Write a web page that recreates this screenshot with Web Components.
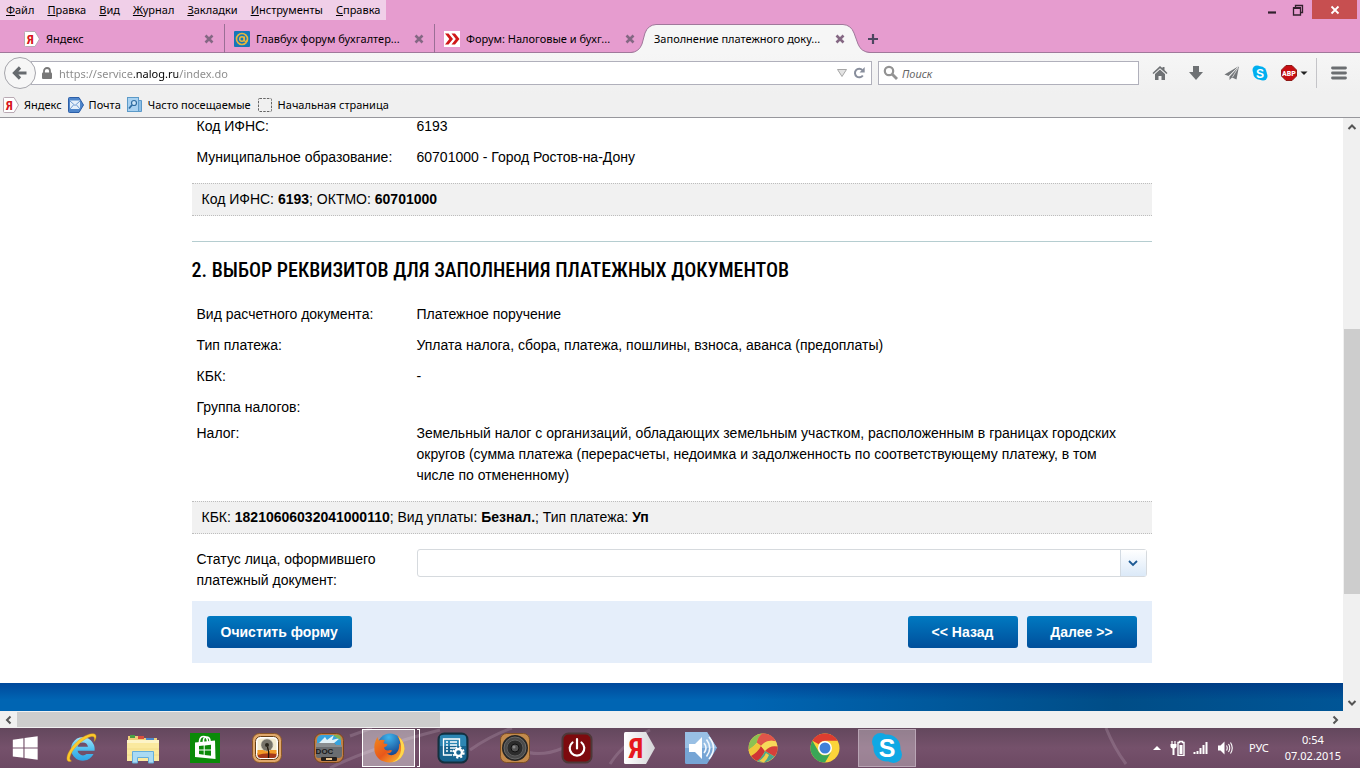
<!DOCTYPE html>
<html lang="ru">
<head>
<meta charset="utf-8">
<title>Заполнение платежного документа</title>
<style>
  html, body { height: 100%; margin: 0; }
  body {
    font: 11px/16px "Noto Sans", "Open Sans", sans-serif;
    color: #000;
    background: #fff;
    overflow: hidden;
  }
</style>
</head>
<body>
<desktop-screen></desktop-screen>

<script>
(function () {
  'use strict';

  const reset = `
    * { box-sizing: border-box; }
    button { border: 0; padding: 0; margin: 0; background: transparent; font: inherit; color: inherit; cursor: default; }
    a { color: inherit; text-decoration: none; }
    input, select { font: inherit; margin: 0; border: 0; padding: 0; outline: 0; background: transparent; }
  `;

  function define(name, style, markup, setup) {
    const template = document.createElement('template');
    template.innerHTML = `<style>${reset}${style}</style>${markup}`;
    customElements.define(name, class extends HTMLElement {
      constructor() {
        super();
        this.attachShadow({ mode: 'open' }).appendChild(template.content.cloneNode(true));
      }
      connectedCallback() {
        if (setup) {
          setup.call(this, this.shadowRoot);
        }
      }
    });
  }

  // name: [size, markup]
  const icons = {
    yandex: [16, `<path d="M.5 1.5a1 1 0 0 1 1-1H11L15.500 8 11 15.500H1.500a1 1 0 0 1-1-1z" fill="#fff" stroke="#b9a9b3"/><text x="6.500" y="13" text-anchor="middle" font-size="13" font-family="Roboto Condensed, Liberation Sans" font-weight="bold" fill="#d8141c">Я</text>`],
    glavbuh: [16, `<rect width="16" height="16" rx="1" fill="#1577b8"/><circle cx="8" cy="8" r="5.500" fill="none" stroke="#e8b63c" stroke-width="1.600"/><circle cx="8" cy="8" r="2.300" fill="none" stroke="#e8b63c" stroke-width="1.500"/><path d="M10.300 5.500V9q.2 1.500 1.500 1.500t1.700-2" fill="none" stroke="#e8b63c" stroke-width="1.500"/>`],
    forum: [16, `<rect width="16" height="16" fill="#fff"/><path d="M1 2.500h3.500L9 8l-4.500 5.500H1L5.300 8zM7.500 2.500H11L15.500 8 11 13.500H7.500L11.800 8z" fill="#d01818"/>`],
    mail: [16, `<path d="M.5 1.500a1 1 0 0 1 1-1H11L15.500 8 11 15.500H1.500a1 1 0 0 1-1-1z" fill="#4f86cb" stroke="#2c5fa8"/><rect x="2" y="3.500" width="10" height="8.500" fill="#e6effa"/><path d="M2 4l5 4.500L12 4M2 12l3.500-4M12 12L8.500 8" fill="none" stroke="#6e9ad1"/>`],
    often: [16, `<path d="M2 3.500h12.500v11H2z" fill="#8dbfe6" stroke="#5a98c9"/><rect x=".5" y=".5" width="11" height="14" fill="#a9d2f1" stroke="#5c9ac8"/><circle cx="7" cy="6" r="2.500" fill="#cde6f8" stroke="#2f6da1" stroke-width="1.200"/><path d="M5 8l-3 3.500" stroke="#2f6da1" stroke-width="1.800"/>`],
    blank: [16, `<rect x="1.500" y="1.500" width="13" height="13" rx="1" fill="none" stroke="#666" stroke-dasharray="2.500 1.200"/>`],
    close: [10, `<path d="M1.500 1.500l7 7M8.500 1.500l-7 7" stroke="#846783" stroke-width="2.600"/>`],
    plus: [12, `<path d="M6 1v10M1 6h10" stroke="#4d4660" stroke-width="2.200"/>`],
    minimize: [12, `<path d="M2 8.500h8" stroke="#31202d" stroke-width="2.200"/>`],
    restore: [12, `<path d="M1.500 4h7v7h-7zM3.500 3.500v-2h7v7h-1.500" fill="none" stroke="#31202d" stroke-width="1.300"/><path d="M1 4h8" stroke="#31202d" stroke-width="2"/>`],
    cross: [10, `<path d="M1.500 1.500l7 7M8.500 1.500l-7 7" stroke="#fff" stroke-width="1.800"/>`],
    back: [16, `<path d="M14.500 8H3M8 2.500L2.500 8 8 13.500" fill="none" stroke="#666a6e" stroke-width="3.200"/>`],
    lock: [12, `<path d="M3 6V4a3 3 0 0 1 6 0v2" fill="none" stroke="#787878" stroke-width="1.800"/><rect x="1" y="5.500" width="10" height="6.500" rx="1" fill="#787878"/>`],
    history: [10, `<path d="M.5 1.500h9L5 8.500z" fill="#e3e3e3" stroke="#a7a7a7"/>`],
    reload: [12, `<path d="M9.800 8.500A4.300 4.300 0 1 1 9.300 3" fill="none" stroke="#888e9c" stroke-width="2"/><path d="M11.700 0v5.500H6.500z" fill="#888e9c"/>`],
    search: [16, `<circle cx="6" cy="6" r="4.200" fill="none" stroke="#939393" stroke-width="2.200"/><path d="M9 9l5 5" stroke="#939393" stroke-width="2.800"/>`],
    home: [16, `<path d="M8 1L.5 8l1 1L8 3.300 14.500 9l1-1L12.500 5V2h-2v1.300z" fill="#6e7174"/><path d="M3 9l5-4.500L13 9v6H9.500v-4h-3v4H3z" fill="#6e7174"/>`],
    download: [16, `<path d="M5 1h6v6h4l-7 8-7-8h4z" fill="#6e7174"/>`],
    plane: [16, `<path d="M15 1L.5 9.500 4.500 11z" fill="#74777a"/><path d="M15 1L5.500 11.500V15l2.500-2.500 4.500 2z" fill="#74777a"/><path d="M15 1L5 11.500M14 3l-5.500 9" stroke="#f4f4f4" stroke-width=".7"/>`],
    skype: [16, `<circle cx="5" cy="5" r="4.500" fill="#00aff0"/><circle cx="11" cy="11" r="4.500" fill="#00aff0"/><circle cx="8" cy="8" r="6.800" fill="#00aff0"/><text x="8" y="12.500" text-anchor="middle" font-size="12" font-weight="bold" font-family="Liberation Sans" fill="#fff">S</text>`],
    adblock: [16, `<path d="M5 .5h6L15.500 5v6L11 15.500H5L.5 11V5z" fill="#c70d12" stroke="#8e1a17"/><text x="8" y="11" text-anchor="middle" font-size="8" font-weight="bold" font-family="Roboto Condensed, Liberation Sans" fill="#fff">ABP</text>`],
    caret: [8, `<path d="M.5 2.500h7L4 6z" fill="#222"/>`],
    menu: [16, `<path d="M1.500 3h13M1.500 8h13M1.500 13h13" stroke="#6b6e71" stroke-width="2.800" stroke-linecap="round"/>`],
    up: [10, `<path d="M1.500 7L5 3.500 8.500 7" fill="none" stroke="#555" stroke-width="2"/>`],
    down: [10, `<path d="M1.500 3L5 6.500 8.500 3" fill="none" stroke="#555" stroke-width="2"/>`],
    left: [10, `<path d="M6.500 1.500L3 5l3.500 3.500" fill="none" stroke="#555" stroke-width="2"/>`],
    right: [10, `<path d="M3.500 1.500L7 5 3.500 8.500" fill="none" stroke="#555" stroke-width="2"/>`],
    chevron: [12, `<path d="M2 4l4 4 4-4" fill="none" stroke="#1d5a94" stroke-width="1.800"/>`],

    windows: [32, `<path d="M3 7.300l11.300-1.700V15.400H3zM15.500 5.400L29.500 3.500v11.900h-14zM3 16.600h11.300v9.900L3 25zM15.500 16.600h14v12l-14-2z" fill="#fff"/>`],
    ie: [32, `<defs><linearGradient id="g" gradientUnits="userSpaceOnUse" x1="0" y1="5" x2="0" y2="30"><stop stop-color="#a4e6fb"/><stop offset=".5" stop-color="#4fc0f0"/><stop offset="1" stop-color="#2b9fe4"/></linearGradient></defs><path d="M28.500 22A11.800 11.800 0 1 1 29.500 18.800H12.500A5.400 5.400 0 0 0 21.500 22zM12.600 14.700H23A5.300 5.300 0 0 0 12.600 14.700z" fill="url(#g)" fill-rule="evenodd"/><path d="M6.500 29C1 31.500 0 25 6 16.500 12 7.500 24 0 29.500 2c2.500 1.200 1.800 4.500-.3 7.500.8-3.500.2-5.500-2.800-5C20 5.500 9 15 6 22c-1.800 4-1.500 6 .5 7z" fill="#fcc92c" stroke="#d79a10" stroke-width=".4"/>`],
    explorer: [32, `<path d="M1 4h11l2 2h16v23H1z" fill="#eed07a"/><rect x="3" y="3" width="5" height="3" fill="#49a046"/><rect x="11" y="4" width="6" height="3" fill="#d84e3e"/><rect x="19" y="6" width="8" height="2" fill="#4c89c9"/><path d="M0 8h32v21H0z" fill="#fae99f"/><path d="M0 8h32v3H0z" fill="#fdf4c8"/><path d="M0 17h32M0 23h32" stroke="#f0d884" stroke-width=".8"/><path d="M5.500 31V19.500h21V31h-5v-5.500h-11V31z" fill="#a9daf4" stroke="#65aedb"/>`],
    store: [32, `<rect x="1" y="1" width="30" height="30" fill="#0a8a08"/><path d="M6 10.500l20-2 .500 18.500L6 25z" fill="#fff"/><path d="M10.500 12V9q.5-4.500 4-4.500T18.500 9v1M14.500 10V8q.5-3.500 3.500-3t3 4" fill="none" stroke="#fff" stroke-width="1.600"/><path d="M10 14l4.700-.5v4H10zM15.700 13.400l6.300-.6v4.700h-6.300zM10 18.500h4.700v4.300L10 22zM15.700 18.500H22v5.200l-6.300-.8z" fill="#0a8a08"/>`],
    dandelion: [32, `<rect x="1.500" y="1.500" width="29" height="29" rx="7" fill="#e0a76a" stroke="#8c5726"/><rect x="4.500" y="4.500" width="23" height="23" rx="5" fill="#fff" stroke="#674016"/><rect x="6.500" y="6.500" width="19" height="19" rx="3" fill="#f2ead0"/><path d="M6.500 21h19v2q0 3-3 3h-13q-3 0-3-3z" fill="#a5391a"/><path d="M6.500 18h19v4q-10-2-19 1z" fill="#f29a28"/><circle cx="16" cy="13" r="6" fill="#77746a"/><circle cx="16" cy="13" r="6" fill="none" stroke="#c9c6b8" stroke-dasharray="1 1"/><circle cx="16" cy="13" r="2" fill="#29251c"/><path d="M16.500 15q2 5 1 11" fill="none" stroke="#1d1408" stroke-width="1.300"/>`],
    doc: [32, `<rect x="1.500" y="1.500" width="29" height="29" rx="7" fill="#c28046" stroke="#76451e"/><path d="M4 13V7q1-4 5-4h14q4 0 5 4v6z" fill="#38a3dc"/><path d="M6 11l6-6 2 3 7-5-2 5 8-2-7 6z" fill="#e1f1f6"/><path d="M20 3h4q4 0 4 5l-4-2z" fill="#7fb455"/><path d="M3 11h18l2 2h6v11q-1 2-3 2H6q-3 0-3-2z" fill="#6a6d70"/><path d="M3 11h18l2 2h6v2H3z" fill="#8a8e90"/><text x="11.500" y="22" text-anchor="middle" font-size="8" font-weight="bold" font-family="Liberation Sans" fill="#191919">DOC</text><rect x="8" y="25" width="16" height="4" rx="1" fill="#25201c"/><rect x="13" y="26" width="6" height="2" fill="#e7c18a"/>`],
    firefox: [32, `<defs><radialGradient id="f" cx=".45" cy=".15" r=".8"><stop stop-color="#3fb4ec"/><stop offset="1" stop-color="#123a86"/></radialGradient><linearGradient id="o" x2="1" y2="1"><stop stop-color="#f08a1e"/><stop offset=".5" stop-color="#e9571a"/><stop offset="1" stop-color="#ffcf35"/></linearGradient></defs><circle cx="17" cy="14" r="12.500" fill="url(#f)"/><path d="M25 4q6.500 5 6.500 13Q30 29 17 30.500 4 30 1.500 19 .5 11 4.500 5q.2 2.500 1.500 3.500Q9 7 12 8.500q-1.500 1-1.500 3l4 .5q0 2-3.500 3.500.5 3 4 3 2.500-1 4 0-1 3-5 3 4 3.500 9 0 4-4 3-10 1.500 1 1.500 3 0-6-3-10.500z" fill="url(#o)"/><path d="M25 4q6.500 5 6.500 13Q30 28 19 30.500q8-3.500 9-12 .5-8-3-14.500z" fill="#ffd84c"/>`],
    settings: [32, `<rect x="1.500" y="1.500" width="29" height="29" rx="6" fill="#17648f" stroke="#14303f" stroke-width="2"/><path d="M3 4q1-1 3-1h20q3 0 3 3v8H3z" fill="#2d86b3"/><path d="M9 10h2M13 10h7M9 13h2M13 13h7M9 16h2M13 16h5M9 19h2M13 19h2" stroke="#fff" stroke-width="1.300"/><path d="M22.500 14V7H6.500v16H15" fill="none" stroke="#fff" stroke-width="1.300"/><circle cx="21.500" cy="20.500" r="3.500" fill="#17648f" stroke="#fff" stroke-width="2.400"/><circle cx="21.500" cy="20.500" r="5.200" fill="none" stroke="#fff" stroke-width="2" stroke-dasharray="2.100 2"/>`],
    speaker: [32, `<rect x="1.500" y="1.500" width="29" height="29" rx="6" fill="#c38a4c" stroke="#7f5125"/><circle cx="16" cy="16" r="13" fill="#262626"/><circle cx="16" cy="16" r="11" fill="#4a4a4a" stroke="#6a6a6a"/><circle cx="16" cy="16" r="8" fill="#2c2c2c" stroke="#5d5d5d"/><circle cx="16" cy="16" r="4" fill="#555" stroke="#111"/><circle cx="15" cy="15" r="1.500" fill="#888"/>`],
    power: [32, `<rect x="1.500" y="1.500" width="29" height="29" rx="6" fill="#7d0a0e" stroke="#4d3838" stroke-width="2"/><path d="M11.500 10.500a7.300 7.300 0 1 0 9 0M16 7v9.500" fill="none" stroke="#fff" stroke-width="2.200" stroke-linecap="round"/>`],
    yandexbig: [32, `<defs><linearGradient id="y" x2="1"><stop stop-color="#fff"/><stop offset="1" stop-color="#d5d5d8"/></linearGradient></defs><path d="M1 1.500Q1 0 2.500 0H23l9 16-9 16H2.500Q1 32 1 30.500z" fill="url(#y)"/><text x="13" y="26" text-anchor="middle" font-size="28" font-weight="bold" font-family="Roboto Condensed, Liberation Sans" fill="#e6191e">Я</text>`],
    volume: [32, `<path d="M0 1.500Q0 0 1.500 0H22l10 16-10 16H1.500Q0 32 0 30.500z" fill="#76a5d5"/><path d="M0 0h22l10 16H0z" fill="#98bfe4"/><path d="M4 12h6l7-7v22l-7-7H4z" fill="#fff"/><path d="M19 11q4 5 0 10M21.500 7.500q6.500 8.500 0 17M24 5q9 11 0 22" fill="none" stroke="#f3f8fd" stroke-width="1.600"/>`],
    ball: [32, `<circle cx="16" cy="16" r="14.500" fill="#f4d04a"/><path d="M2 12Q5 3 15 1.500q-5 5-5 9-3 4-8 7z" fill="#8cc152"/><path d="M15 1.500Q25 1 29 9.500 20 7 14 14q-2-2-4-3 0-5 5-9.500z" fill="#e0554a"/><path d="M1.500 18q8-6 8.500-7l4 3Q9 22 4 24q-2-3-2.500-6z" fill="#f0c63a"/><path d="M4 24q7-4 10-10l4 5q-4 8-8 10-4-2-6-5z" fill="#cf3435"/><path d="M29 9.500l1.500 5q-7-1-12.500 4.500l-4-5Q20 7 29 9.500z" fill="#f6d95a"/><path d="M30.500 14.500q.5 6-3 10L18 19q5-6 12.500-4.500z" fill="#d5403a"/><path d="M10 29q5-3 8-10l9.500 5.500Q20 33 10 29z" fill="#4ba58c"/><path d="M12 29q5-3 7-8l3 2q-2 5-5 7.500z" fill="#f0cc49"/>`],
    chrome: [32, `<circle cx="16" cy="16" r="14.500" fill="#fbd43a"/><path d="M3.440 8.750A14.500 14.500 0 0 1 28.560 8.750H16A7.250 7.250 0 0 0 9.720 12.370z" fill="#de3d30"/><path d="M3.440 8.750A14.500 14.500 0 0 0 16 30.500L22.280 19.630A7.250 7.250 0 0 1 9.720 19.630z" fill="#3aa757"/><circle cx="16" cy="16" r="7" fill="#fff"/><circle cx="16" cy="16" r="5.500" fill="#3f80d8"/>`],
    skypebig: [32, `<circle cx="9.500" cy="9.500" r="8.500" fill="#0fa8e4"/><circle cx="22.500" cy="22.500" r="8.500" fill="#0fa8e4"/><circle cx="16" cy="16" r="13.500" fill="#0fa8e4"/><text x="16" y="25" text-anchor="middle" font-size="25" font-weight="bold" font-family="Liberation Sans" fill="#fff">S</text>`],
    trayup: [8, `<path d="M0 6h8L4 2z" fill="#fff"/>`],
    battery: [16, `<path d="M3 1v3M6 1v3" stroke="#fff" stroke-width="1.200"/><path d="M1.500 4h6v2.500q0 1.500-2 2V15h-2V8.500q-2-.5-2-2z" fill="#fff"/><path d="M9 2.500h1.500v-1h3v1H15v13H9z" fill="none" stroke="#fff" stroke-width="1.400"/><path d="M10.500 5h3v9h-3z" fill="#fff"/>`],
    signal: [16, `<path d="M1.500 14v-2M4.500 14v-3M7.500 14V8M10.500 14V5M13.500 14V2" stroke="#fff" stroke-width="2"/>`],
    sound: [16, `<path d="M1 5.500h2.500L7.500 1.500v13l-4-4H1z" fill="#fff"/><path d="M9.500 5.500q1.500 2.500 0 5M11.500 4q2.500 4 0 8M13.500 2.500q3.500 5.500 0 11" fill="none" stroke="#fff" stroke-width="1.100"/>`]
  };

  customElements.define('ui-icon', class extends HTMLElement {
    connectedCallback() {
      if (this.shadowRoot) {
        return;
      }
      const [size, body] = icons[this.getAttribute('name')];
      const shown = this.getAttribute('size') || size;
      this.attachShadow({ mode: 'open' }).innerHTML = `
        <style>:host { display: inline-flex; flex: none; } svg { display: block; }</style>
        <svg width="${shown}" height="${shown}" viewBox="0 0 ${size} ${size}" aria-hidden="true">${body}</svg>`;
    }
  });

  define('menu-bar', `
    :host { display: flex; justify-content: space-between; align-items: flex-start; height: 20px; }
    nav { display: flex; gap: 13px; height: 20px; padding: 2px 6px; background: #f0cfe8; }
    nav button { line-height: 16px; }
    .controls { display: flex; margin-right: 3px; }
    .controls button { display: grid; place-items: center; width: 26px; height: 19px; }
    .controls .close { width: 45px; margin-left: 1px; background: #c74f50; }
  `, `
    <nav aria-label="Меню">
      <button><u>Ф</u>айл</button><button><u>П</u>равка</button><button><u>В</u>ид</button>
      <button><u>Ж</u>урнал</button><button><u>З</u>акладки</button>
      <button><u>И</u>нструменты</button><button><u>С</u>правка</button>
    </nav>
    <div class="controls">
      <button aria-label="Свернуть"><ui-icon name="minimize"></ui-icon></button>
      <button aria-label="Восстановить"><ui-icon name="restore"></ui-icon></button>
      <button class="close" aria-label="Закрыть"><ui-icon name="cross"></ui-icon></button>
    </div>
  `);

  define('browser-tab', `
    :host { display: flex; align-items: center; gap: 6px; flex: 0 1 210px; min-width: 0; height: 29px; padding: 0 10px 0 9px; position: relative; }
    :host([divided]) { border-right: 1px solid #9a6f95; }
    .shape { display: none; position: absolute; left: -14px; top: 0; width: 240px; height: 29px; }
    :host([active]) .shape { display: block; }
    .title { flex: 1; min-width: 0; overflow: hidden; white-space: nowrap; position: relative; }
    .end { position: relative; display: flex; }
  `, `
    <svg class="shape" viewBox="0 0 240 29" aria-hidden="true">
      <path d="M0 29Q8 28 11 20L14 9Q17 1 25 .5H212Q220 1 223 9L227 20Q230 28 239 29z" fill="#f6f6f6"/>
      <path d="M0 28.500Q8 28 11 20L14 9Q17 1 25 .5H212Q220 1 223 9L227 20Q230 28 239 28.500" fill="none" stroke="#a0789b"/>
    </svg>
    <slot name="icon"></slot>
    <span class="title"><slot></slot></span>
    <button class="end" aria-label="Закрыть вкладку"><ui-icon name="close"></ui-icon></button>
  `);

  define('tab-strip', `
    :host { display: flex; align-items: center; height: 33px; padding: 4px 15px 0; box-shadow: inset 0 -1px #a0789b; }
    .add { margin-left: 12px; display: flex; }
  `, `
    <browser-tab divided><ui-icon slot="icon" name="yandex"></ui-icon>Яндекс</browser-tab>
    <browser-tab divided><ui-icon slot="icon" name="glavbuh"></ui-icon>Главбух форум бухгалтер...</browser-tab>
    <browser-tab><ui-icon slot="icon" name="forum"></ui-icon>Форум: Налоговые и бухг...</browser-tab>
    <browser-tab active>Заполнение платежного доку...</browser-tab>
    <button class="add" aria-label="Новая вкладка"><ui-icon name="plus"></ui-icon></button>
  `);

  define('nav-toolbar', `
    :host { display: flex; align-items: center; height: 40px; padding: 0 12px 0 4px; background: linear-gradient(#f6f6f6, #f0f0f0); }
    .back { display: grid; place-items: center; flex: none; width: 32px; height: 32px; border: 1px solid #a5a5ab; border-radius: 50%; background: #f6f6f6; z-index: 1; }
    .field { display: flex; align-items: center; height: 24px; background: #fff; border: 1px solid #b0b0bb; }
    .address { flex: 1; min-width: 0; margin-left: -5px; padding: 0 6px 0 9px; gap: 6px; }
    .address button { display: flex; }
    .search { flex: 0 1 261px; margin-left: 6px; padding: 0 4px; gap: 3px; }
    input { flex: 1; min-width: 0; height: 20px; }
    #url {
      color: #777; -webkit-text-fill-color: transparent; -webkit-background-clip: text; background-clip: text;
      background-image: linear-gradient(90deg, #888 75px, #000 75px, #000 119px, #888 119px);
    }
    #find::placeholder { color: #666; font-style: italic; opacity: 1; }
    .tools { display: flex; align-items: center; margin-left: 3px; }
    .tools button { display: flex; align-items: center; justify-content: center; width: 36px; height: 24px; gap: 3px; }
    .tools .skype { width: 20px; margin-right: 10px; }
    .tools .adblock { width: 28px; }
    .tools .menu { width: 32px; height: 30px; margin-left: 8px; padding-left: 12px; border-left: 1px solid #c4c4c8; }
  `, `
    <button class="back" aria-label="Назад"><ui-icon name="back"></ui-icon></button>
    <div class="field address">
      <ui-icon name="lock"></ui-icon>
      <input id="url" type="text" aria-label="Адрес" value="https://service.nalog.ru/index.do" spellcheck="false">
      <button aria-label="История"><ui-icon name="history"></ui-icon></button>
      <button aria-label="Обновить"><ui-icon name="reload"></ui-icon></button>
    </div>
    <div class="field search">
      <ui-icon name="search"></ui-icon>
      <input id="find" type="text" aria-label="Поиск" placeholder="Поиск">
    </div>
    <div class="tools">
      <button aria-label="Домой"><ui-icon name="home"></ui-icon></button>
      <button aria-label="Загрузки"><ui-icon name="download"></ui-icon></button>
      <button aria-label="Отправить"><ui-icon name="plane"></ui-icon></button>
      <button class="skype" aria-label="Skype"><ui-icon name="skype"></ui-icon></button>
      <button class="adblock" aria-label="Adblock Plus"><ui-icon name="adblock"></ui-icon><ui-icon name="caret"></ui-icon></button>
      <button class="menu" aria-label="Открыть меню"><ui-icon name="menu"></ui-icon></button>
    </div>
  `);

  define('bookmarks-bar', `
    :host { display: flex; align-items: center; gap: 6px; height: 25px; padding: 0 3px; background: #f0f0f0; border-bottom: 1px solid #97979c; }
    a { display: flex; align-items: center; gap: 5px; white-space: nowrap; }
  `, `
    <a href="#yandex"><ui-icon name="yandex"></ui-icon>Яндекс</a>
    <a href="#mail"><ui-icon name="mail"></ui-icon>Почта</a>
    <a href="#often"><ui-icon name="often"></ui-icon>Часто посещаемые</a>
    <a href="#start"><ui-icon name="blank"></ui-icon>Начальная страница</a>
  `);

  define('scroll-bar', `
    :host { display: flex; flex: none; flex-direction: column; width: 17px; padding-left: 1px; background: #f0f0f0; }
    :host([horizontal]) { flex-direction: row; width: auto; height: 17px; padding: 1px 17px 1px 0; }
    button { flex: none; width: 16px; height: 17px; display: grid; place-items: center; }
    :host([horizontal]) button { width: 17px; height: 15px; }
    .back, .forward { display: none; }
    :host([horizontal]) .back, :host([horizontal]) .forward { display: grid; }
    :host([horizontal]) .up, :host([horizontal]) .down { display: none; }
    .before { flex: var(--before) 0 0; }
    .thumb { flex: var(--thumb) 0 0; background: #cdcdcd; }
    .after { flex: var(--after) 0 0; }
  `, `
    <button class="up" aria-label="Вверх"><ui-icon name="up"></ui-icon></button>
    <button class="back" aria-label="Влево"><ui-icon name="left"></ui-icon></button>
    <span class="before"></span><span class="thumb"></span><span class="after"></span>
    <button class="down" aria-label="Вниз"><ui-icon name="down"></ui-icon></button>
    <button class="forward" aria-label="Вправо"><ui-icon name="right"></ui-icon></button>
  `);

  define('form-row', `
    :host { display: grid; grid-template-columns: 215px 1fr; column-gap: 5px; padding: 5px; line-height: 21px; }
    :host([tight]) { padding-bottom: 0; }
    :host([text]) { padding-right: 20px; }
  `, `<div><slot name="label"></slot></div><div><slot></slot></div>`);

  define('summary-bar', `
    :host { display: block; margin: 10px 0 0; padding: 5px 10px; line-height: 21px; background: #f1f1f1; border: dotted #bdbdbd; border-width: 1px 0; }
  `, `<slot></slot>`);

  define('blue-button', `
    :host { display: inline-flex; }
    button {
      min-width: 110px; height: 32px; padding: 0 14px; border-radius: 3px; color: #fff; font-weight: bold;
      background: linear-gradient(#0079c1, #004f9b);
    }
  `, `<button type="button"><slot></slot></button>`);

  define('payment-form', `
    :host { display: block; width: 100%; max-width: 960px; margin: 0 auto; font: 14px/21px "Liberation Sans", Arial, sans-serif; }
    form { margin: -7px 0 0; }
    h2 {
      margin: 25px 0 0; padding: 16px 0 17px; border-top: 1px solid #b5cdd0; text-transform: uppercase;
      font: 500 20px/24px "Roboto Condensed", "Liberation Sans Narrow", "Open Sans Condensed", "Liberation Sans", sans-serif;
      white-space: nowrap;
    }
    .status { margin-top: 10px; }
    .select { display: grid; }
    .select > * { grid-area: 1 / 1; }
    select { appearance: none; width: 100%; height: 28px; padding: 0 34px 0 6px; border: 1px solid #d6dade; border-radius: 3px; background: #fff; }
    .arrow {
      justify-self: end; display: grid; place-items: center; width: 26px; height: 26px; margin: 1px;
      border-left: 1px solid #d3dbe3; background: linear-gradient(#fff, #dbe9f8); pointer-events: none;
    }
    .actions { display: flex; gap: 9px; margin-top: 5px; padding: 15px; background: #e5eefa; }
    .actions :first-child { margin-right: auto; }
  `, `
    <form>
      <form-row><span slot="label">Код ИФНС:</span>6193</form-row>
      <form-row><span slot="label">Муниципальное образование:</span>60701000 - Город Ростов-на-Дону</form-row>
      <summary-bar>Код ИФНС: <b>6193</b>; ОКТМО: <b>60701000</b></summary-bar>
      <h2>2. Выбор реквизитов для заполнения платежных документов</h2>
      <form-row><span slot="label">Вид расчетного документа:</span>Платежное поручение</form-row>
      <form-row><span slot="label">Тип платежа:</span>Уплата налога, сбора, платежа, пошлины, взноса, аванса (предоплаты)</form-row>
      <form-row><span slot="label">КБК:</span>-</form-row>
      <form-row tight><span slot="label">Группа налогов:</span></form-row>
      <form-row text><span slot="label">Налог:</span>Земельный налог с организаций, обладающих земельным участком, расположенным в границах городских округов (сумма платежа (перерасчеты, недоимка и задолженность по соответствующему платежу, в том числе по отмененному)</form-row>
      <summary-bar>КБК: <b>18210606032041000110</b>; Вид уплаты: <b>Безнал.</b>; Тип платежа: <b>Уп</b></summary-bar>
      <form-row class="status">
        <label slot="label" for="status">Статус лица, оформившего платежный документ:</label>
        <div class="select">
          <select id="status"><option></option></select>
          <span class="arrow"><ui-icon name="chevron"></ui-icon></span>
        </div>
      </form-row>
      <div class="actions">
        <blue-button>Очистить форму</blue-button>
        <blue-button>&lt;&lt; Назад</blue-button>
        <blue-button>Далее &gt;&gt;</blue-button>
      </div>
    </form>
  `);

  define('page-view', `
    :host { display: flex; flex: 1; min-height: 0; background: #fff; }
    main { display: flex; flex-direction: column; flex: 1; min-width: 0; overflow: hidden; }
    footer {
      flex: 1; min-height: 28px; margin-top: 20px;
      background: linear-gradient(rgba(0, 30, 120, .4), rgba(0, 30, 120, 0) 60%), linear-gradient(90deg, #0065b3 55%, #004d87 83%, #005596);
    }
    scroll-bar { --before: 194; --thumb: 265; --after: 100; }
  `, `
    <main><payment-form></payment-form><footer></footer></main>
    <scroll-bar></scroll-bar>
  `);

  define('task-button', `
    :host { display: block; flex: 0 1 62px; padding: 0 2px; height: 40px; }
    :host([start]) { flex-basis: 50px; }
    button { display: grid; place-items: center; width: 100%; height: 38px; margin-top: 1px; border: 1px solid transparent; }
    :host([open]) button { background: rgba(255, 255, 255, .3); border-color: #b9a5b5; }
    :host([current]) { display: flex; gap: 2px; }
    :host([current]) button { background: rgba(255, 255, 255, .4); border-color: #fff; }
    .stack { display: none; flex: none; width: 3px; height: 38px; margin-top: 1px; border: solid #fff; border-width: 1px 1px 1px 0; }
    :host([current]) .stack { display: block; }
  `, `<button><slot></slot></button><span class="stack"></span>`, function (root) {
    root.querySelector('button').setAttribute('aria-label', this.getAttribute('label'));
  });

  define('task-bar', `
    :host { display: grid; flex: none; height: 40px; color: #fff; background: linear-gradient(#63475d, #75516b 50%, #6c4963); }
    :host > * { grid-area: 1 / 1; min-width: 0; }
    .wisps { grid-area: 1 / 1; width: 100%; height: 40px; }
    .bar { grid-area: 1 / 1; display: flex; align-items: center; }
    .tray { display: flex; align-items: center; gap: 8px; margin-left: auto; padding-right: 19px; white-space: nowrap; }
    .lang { margin: 0 8px; }
    .clock { text-align: center; }
  `, `
    <svg class="wisps" viewBox="0 0 1360 40" preserveAspectRatio="none" fill="none" stroke="#ad91a6" stroke-opacity=".35" stroke-width="3" aria-hidden="true">
      <path d="M330 40q40-20 110-38M470 22q20-14 42-22M520 22q30 12 66-16M610 36q14-22 40-34M350 8l22-8M1106 0q8 20 20 36" />
    </svg>
    <div class="bar">
      <task-button start label="Пуск"><ui-icon name="windows" size="30"></ui-icon></task-button>
      <task-button label="Internet Explorer"><ui-icon name="ie"></ui-icon></task-button>
      <task-button label="Проводник"><ui-icon name="explorer"></ui-icon></task-button>
      <task-button label="Магазин"><ui-icon name="store"></ui-icon></task-button>
      <task-button label="Просмотр фото"><ui-icon name="dandelion"></ui-icon></task-button>
      <task-button label="Документы"><ui-icon name="doc"></ui-icon></task-button>
      <task-button current label="Firefox"><ui-icon name="firefox"></ui-icon></task-button>
      <task-button label="Настройки"><ui-icon name="settings"></ui-icon></task-button>
      <task-button label="Динамик"><ui-icon name="speaker"></ui-icon></task-button>
      <task-button label="Выключение"><ui-icon name="power"></ui-icon></task-button>
      <task-button label="Яндекс"><ui-icon name="yandexbig"></ui-icon></task-button>
      <task-button label="Громкость"><ui-icon name="volume"></ui-icon></task-button>
      <task-button label="Игра"><ui-icon name="ball"></ui-icon></task-button>
      <task-button label="Chrome"><ui-icon name="chrome"></ui-icon></task-button>
      <task-button open label="Skype"><ui-icon name="skypebig"></ui-icon></task-button>
      <div class="tray">
        <ui-icon name="trayup"></ui-icon>
        <ui-icon name="battery"></ui-icon>
        <ui-icon name="signal"></ui-icon>
        <ui-icon name="sound"></ui-icon>
        <span class="lang">РУС</span>
        <time class="clock" datetime="2015-02-07T00:54">0:54<br>07.02.2015</time>
      </div>
    </div>
  `);

  define('desktop-screen', `
    :host { display: flex; flex-direction: column; height: 100vh; overflow: hidden; }
    header { flex: none; background: #e69ccf; }
    .across { --before: 0; --thumb: 423; --after: 886; }
  `, `
    <header>
      <menu-bar></menu-bar>
      <tab-strip></tab-strip>
      <nav-toolbar></nav-toolbar>
      <bookmarks-bar></bookmarks-bar>
    </header>
    <page-view></page-view>
    <scroll-bar class="across" horizontal></scroll-bar>
    <task-bar></task-bar>
  `);
}());
</script>
</body>
</html>
